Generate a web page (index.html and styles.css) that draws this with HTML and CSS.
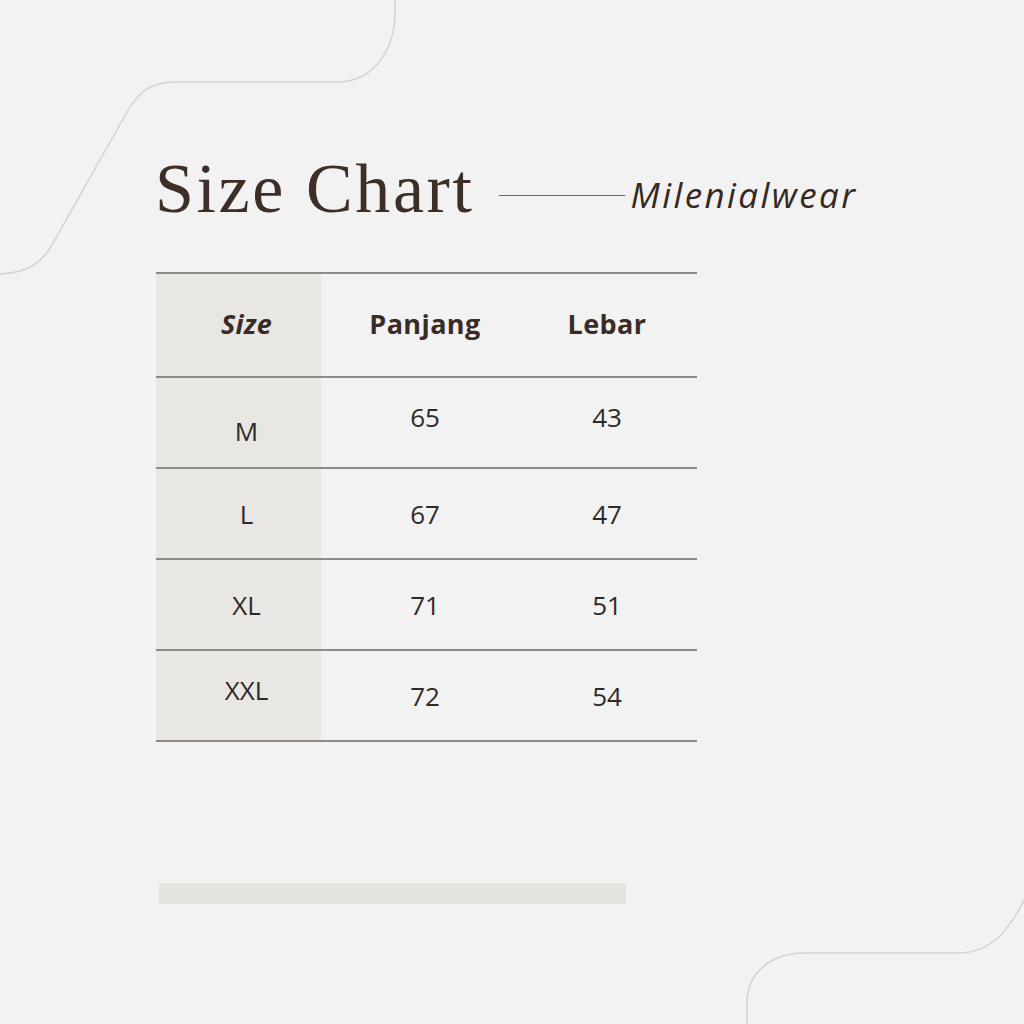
FILE: index.html
```html
<!DOCTYPE html>
<html lang="id">
<head>
<meta charset="utf-8">
<title>Size Chart</title>
<link rel="stylesheet" href="styles.css">
</head>
<body>
<div class="page">
  <svg class="deco" width="1024" height="1024" viewBox="0 0 1024 1024">
    <path d="M0,274 C28,273 42,262 52,245 L127,112 C138,93 150,82 175,82 L337,82 C372,82 395,52 395,12 L395,0" />
    <path d="M747,1024 L747,1003 C747,972 772,953 805,953 L958,953 C990,953 1008,932 1024,900" />
  </svg>

  <header class="head">
    <h1 class="title">Size Chart</h1>
    <span class="rule"></span>
    <span class="brand">Milenialwear</span>
  </header>

  <section class="chart">
    <div class="row row-head">
      <div class="cell c-size"><em>Size</em></div>
      <div class="cell c-p">Panjang</div>
      <div class="cell c-l">Lebar</div>
    </div>
    <div class="row">
      <div class="cell c-size down">M</div>
      <div class="cell c-p up">65</div>
      <div class="cell c-l up">43</div>
    </div>
    <div class="row">
      <div class="cell c-size">L</div>
      <div class="cell c-p">67</div>
      <div class="cell c-l">47</div>
    </div>
    <div class="row">
      <div class="cell c-size">XL</div>
      <div class="cell c-p">71</div>
      <div class="cell c-l">51</div>
    </div>
    <div class="row">
      <div class="cell c-size up">XXL</div>
      <div class="cell c-p">72</div>
      <div class="cell c-l">54</div>
    </div>
  </section>

  <div class="bar"></div>
</div>
</body>
</html>
```
FILE: styles.css
```css
* { box-sizing: border-box; }
html, body {
  margin: 0;
  padding: 0;
  background: #f2f2f2;
}
.page {
  position: relative;
  width: 1024px;
  height: 1024px;
  overflow: hidden;
  background: #f2f2f2;
}
.deco {
  position: absolute;
  left: 0;
  top: 0;
  fill: none;
  stroke: #d3d3d3;
  stroke-width: 1.5;
}
.head {
  position: relative;
  display: flex;
  align-items: flex-end;
  padding: 154px 0 0 155px;
}
.title {
  margin: 0;
  font-family: "Liberation Serif", "Times New Roman", serif;
  font-weight: normal;
  font-size: 70px;
  line-height: 70px;
  letter-spacing: 2.6px;
  color: #3d2f28;
}
.rule {
  width: 126px;
  height: 1.5px;
  margin: 0 6px 28px 24px;
  background: #6d6461;
}
.brand {
  font-family: "Open Sans", "DejaVu Sans", sans-serif;
  font-style: italic;
  font-size: 35px;
  line-height: 35px;
  letter-spacing: 2.4px;
  color: #35291f;
  margin-bottom: 12px;
}
.chart {
  position: relative;
  margin: 48px 0 0 156px;
  width: 541px;
}
.row {
  display: grid;
  grid-template-columns: 165px 208px 168px;
  height: 91px;
  border-bottom: 2px solid #8f8a88;
}
.row-head {
  height: 106px;
  border-top: 2px solid #8f8a88;
}
.cell {
  display: flex;
  align-items: center;
  justify-content: center;
  font-family: "Open Sans", "DejaVu Sans", sans-serif;
  font-size: 26px;
  color: #302a27;
}
.row-head .cell {
  font-weight: 700;
  font-size: 27px;
  letter-spacing: 0.4px;
  color: #3a2c25;
  padding-bottom: 4px;
}
.c-size {
  background: #e9e7e3;
  padding-left: 16px;
}
.c-l { padding-right: 12px; }
.up { padding-bottom: 12px; }
.down { padding-top: 16px; }
.bar {
  margin: 141px 0 0 159px;
  width: 467px;
  height: 21px;
  background: #e4e4df;
}
```
